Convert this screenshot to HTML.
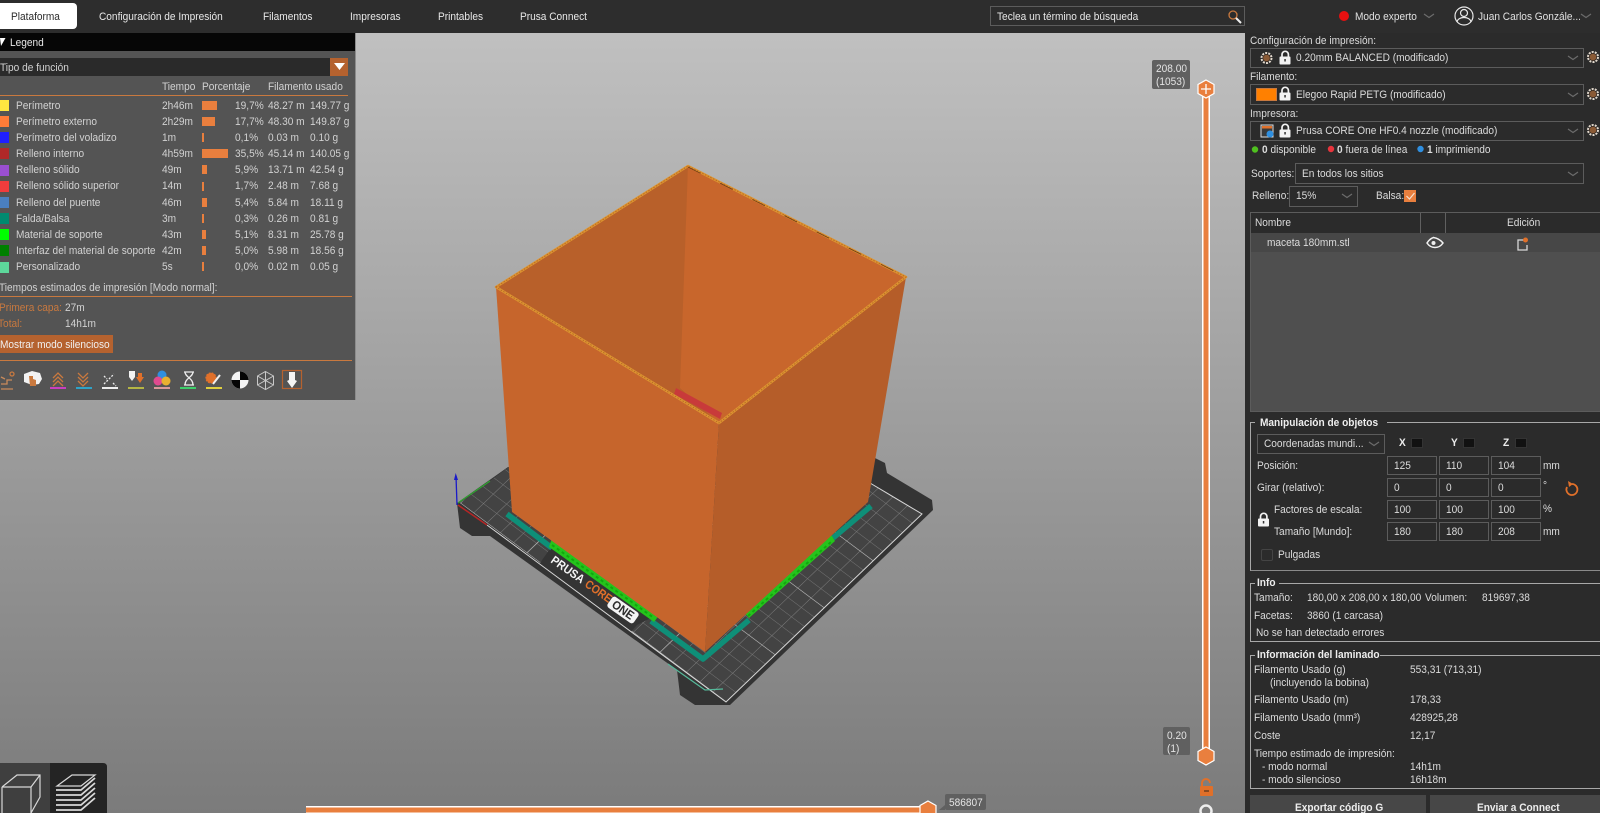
<!DOCTYPE html>
<html lang="es"><head><meta charset="utf-8"><title>PrusaSlicer</title>
<style>
html,body{margin:0;padding:0;width:1600px;height:813px;overflow:hidden;background:#2b2b2b}
body{position:relative;font-family:"Liberation Sans",sans-serif;font-size:11px;color:#dcdcdc;filter:blur(.3px)}
.a{position:absolute;box-sizing:border-box}
.t{position:absolute;white-space:nowrap;line-height:14px;transform:translateY(-50%) scaleX(.92);transform-origin:left center}
.b{font-weight:bold}
.box{position:absolute;box-sizing:border-box;border:1px solid #5c5c5c;background:#2b2b2b}
.g{position:absolute;box-sizing:border-box;border:1px solid #a8a8a8;border-right:0}
.l{color:#d2d2d2}.o{color:#c9793f}
svg{position:absolute;left:0;top:0}
</style></head><body>

<div class="a" style="left:0;top:0;width:1600px;height:33px;background:#2d2d2d"></div>
<div class="a" style="left:0;top:33px;width:1247px;height:780px;background:linear-gradient(#c0c0c0,#7b7b7b)"></div>
<div class="a" style="left:1245px;top:33px;width:355px;height:780px;background:#2b2b2b"></div>

<div class="a" style="left:0;top:3px;width:77px;height:26px;background:#fff;border-radius:0 4px 4px 0"></div>
<div class="a" style="left:990px;top:6px;width:255px;height:20px;border:1px solid #5c5c5c"></div>

<div class="a" style="left:0;top:33px;width:356px;height:367px;background:#545454;border-right:1px solid #8c8c8c"></div>
<div class="a" style="left:0;top:33px;width:355px;height:18px;background:#060606"></div>
<div class="a" style="left:0;top:58px;width:330px;height:18px;background:#2a2a2a"></div>
<div class="a" style="left:330px;top:58px;width:18px;height:18px;background:#b5622f"></div>
<div class="a" style="left:0;top:95px;width:348px;height:1px;background:#c9793f"></div>
<div class="a" style="left:0;top:296px;width:352px;height:1px;background:#c9793f"></div>
<div class="a" style="left:0;top:335px;width:113px;height:18px;background:#b5622f"></div>
<div class="a" style="left:0;top:360px;width:352px;height:1px;background:#c9793f"></div>

<div class="a" style="left:0;top:100px;width:9px;height:11px;background:#ffe640"></div>
<div class="a" style="left:0;top:116px;width:9px;height:11px;background:#ff7c38"></div>
<div class="a" style="left:0;top:132px;width:9px;height:11px;background:#1f1fff"></div>
<div class="a" style="left:0;top:148px;width:9px;height:11px;background:#b02828"></div>
<div class="a" style="left:0;top:165px;width:9px;height:11px;background:#9a4fd0"></div>
<div class="a" style="left:0;top:181px;width:9px;height:11px;background:#f03c3c"></div>
<div class="a" style="left:0;top:197px;width:9px;height:11px;background:#4a7fc0"></div>
<div class="a" style="left:0;top:213px;width:9px;height:11px;background:#008a70"></div>
<div class="a" style="left:0;top:229px;width:9px;height:11px;background:#00ff00"></div>
<div class="a" style="left:0;top:245px;width:9px;height:11px;background:#008000"></div>
<div class="a" style="left:0;top:262px;width:9px;height:11px;background:#5dd79b"></div>

<div class="a" style="left:202px;top:101px;width:15px;height:9px;background:#e97f3e"></div>
<div class="a" style="left:202px;top:117px;width:13px;height:9px;background:#e97f3e"></div>
<div class="a" style="left:202px;top:133px;width:1.5px;height:9px;background:#e97f3e"></div>
<div class="a" style="left:202px;top:149px;width:26px;height:9px;background:#e97f3e"></div>
<div class="a" style="left:202px;top:165px;width:5px;height:9px;background:#e97f3e"></div>
<div class="a" style="left:202px;top:182px;width:2px;height:9px;background:#e97f3e"></div>
<div class="a" style="left:202px;top:198px;width:4.5px;height:9px;background:#e97f3e"></div>
<div class="a" style="left:202px;top:214px;width:1.5px;height:9px;background:#e97f3e"></div>
<div class="a" style="left:202px;top:230px;width:4px;height:9px;background:#e97f3e"></div>
<div class="a" style="left:202px;top:246px;width:4px;height:9px;background:#e97f3e"></div>
<div class="a" style="left:202px;top:262px;width:1.5px;height:9px;background:#e97f3e"></div>

<div class="box" style="left:1250px;top:48px;width:334px;height:20px"></div>
<div class="box" style="left:1250px;top:84px;width:334px;height:21px"></div>
<div class="box" style="left:1250px;top:121px;width:334px;height:20px"></div>
<div class="a" style="left:1256px;top:88px;width:21px;height:13px;background:#ff8000;border:1px solid #c9793f"></div>
<div class="box" style="left:1295px;top:163px;width:289px;height:21px"></div>
<div class="box" style="left:1289px;top:186px;width:69px;height:21px"></div>
<div class="a" style="left:1404px;top:190px;width:12px;height:12px;background:#e97f3e"></div>

<div class="a" style="left:1250px;top:212px;width:350px;height:200px;background:#4f4f4f;border:1px solid #5c5c5c;border-right:0"></div>
<div class="a" style="left:1251px;top:213px;width:349px;height:20px;background:#2b2b2b"></div>
<div class="a" style="left:1251px;top:233px;width:349px;height:19px;background:#474747"></div>
<div class="a" style="left:1420px;top:213px;width:1px;height:20px;background:#606060"></div>
<div class="a" style="left:1445px;top:213px;width:1px;height:20px;background:#606060"></div>

<div class="g" style="left:1250px;top:422px;width:350px;height:149px;border-bottom-color:#8a8a8a"></div>
<div class="a" style="left:1255px;top:418px;width:132px;height:9px;background:#2b2b2b"></div>
<div class="g" style="left:1250px;top:583px;width:350px;height:59px"></div>
<div class="a" style="left:1255px;top:579px;width:24px;height:9px;background:#2b2b2b"></div>
<div class="g" style="left:1250px;top:655px;width:350px;height:134px"></div>
<div class="a" style="left:1255px;top:651px;width:125px;height:9px;background:#2b2b2b"></div>

<div class="box" style="left:1257px;top:434px;width:128px;height:20px"></div>
<div class="a" style="left:1411px;top:438px;width:12px;height:10px;background:#111;border:1px solid #333"></div>
<div class="a" style="left:1463px;top:438px;width:12px;height:10px;background:#111;border:1px solid #333"></div>
<div class="a" style="left:1515px;top:438px;width:12px;height:10px;background:#111;border:1px solid #333"></div>
<div class="box" style="left:1387px;top:456px;width:50px;height:19px"></div><div class="box" style="left:1439px;top:456px;width:50px;height:19px"></div><div class="box" style="left:1491px;top:456px;width:50px;height:19px"></div>
<div class="box" style="left:1387px;top:478px;width:50px;height:19px"></div><div class="box" style="left:1439px;top:478px;width:50px;height:19px"></div><div class="box" style="left:1491px;top:478px;width:50px;height:19px"></div>
<div class="box" style="left:1387px;top:500px;width:50px;height:19px"></div><div class="box" style="left:1439px;top:500px;width:50px;height:19px"></div><div class="box" style="left:1491px;top:500px;width:50px;height:19px"></div>
<div class="box" style="left:1387px;top:522px;width:50px;height:19px"></div><div class="box" style="left:1439px;top:522px;width:50px;height:19px"></div><div class="box" style="left:1491px;top:522px;width:50px;height:19px"></div>
<div class="box" style="left:1261px;top:549px;width:12px;height:12px;border-color:#444;border-radius:2px"></div>

<div class="a" style="left:1250px;top:795px;width:176px;height:18px;background:#474747"></div>
<div class="a" style="left:1430px;top:795px;width:170px;height:18px;background:#474747"></div>

<div class="a" style="left:1152px;top:60px;width:38px;height:29px;background:#606060;border-radius:2px"></div>
<div class="a" style="left:1163px;top:727px;width:27px;height:28px;background:#606060;border-radius:2px"></div>
<div class="a" style="left:945px;top:794px;width:41px;height:16px;background:#606060;border-radius:2px"></div>

<svg width="1600" height="813" viewBox="0 0 1600 813">
<defs>
<pattern id="g1" patternUnits="userSpaceOnUse" width="100" height="100" patternTransform="matrix(.098 -.094 .133 .0995 460 503)"><path d="M0 0H100M0 0V100" stroke="#7e7e7e" stroke-width="6" fill="none"/></pattern>
<pattern id="g2" patternUnits="userSpaceOnUse" width="500" height="500" patternTransform="matrix(.098 -.094 .133 .0995 460 503)"><path d="M0 0H500M0 0V500" stroke="#bdbdbd" stroke-width="8" fill="none"/></pattern>
<g id="gear"><circle r="5" fill="none" stroke="#e2d8cc" stroke-width="2" stroke-dasharray="2 1.15"/><circle r="3.6" fill="#8a5a35" stroke="#3a2a20" stroke-width=".6"/></g>
<g id="lock"><rect x="-5.500" y="-1.500" width="11" height="8" rx="1" fill="#f2f2f2"/><path d="M-3-1.500V-3.500a3.200 3.200 0 0 1 6.400 0V-1.500" fill="none" stroke="#f2f2f2" stroke-width="1.700"/><rect x="-.7" y="1" width="1.500" height="2.500" fill="#333"/></g>
<path id="chev" d="M-5-2L0 1.500 5-2" fill="none" stroke="#6c6c6c" stroke-width="1.200"/>
<clipPath id="gc"><path d="M460 503L726 702 922 514 870 483 700 381 510 466Z"/></clipPath>
</defs>

<!-- bed -->
<path d="M457 503L508 467 875 458 885 463 887 473 932 500 933 510 730 705 695 705 680 695 677 670 490 536 472 536 460 528Z" fill="#343434"/>
<g clip-path="url(#gc)"><rect x="440" y="350" width="500" height="360" fill="#434343"/><rect x="440" y="350" width="500" height="360" fill="url(#g1)"/><rect x="440" y="350" width="500" height="360" fill="url(#g2)"/></g>
<path d="M552 546L653 617 637 625 630 633 540 563Z" fill="#343434"/>
<path d="M487 525L726 702 922 514 870 483" fill="none" stroke="#d8d8d8" stroke-width="1"/>
<path d="M668 664L705 690 723 689" fill="none" stroke="#55b99a" stroke-width="1.200"/>
<path d="M457 505L456 476" stroke="#1a1ac8" stroke-width="1.300"/><path d="M454 480L455.700 473 458 480Z" fill="#1a1ac8"/>
<path d="M458 503L490 481" stroke="#2fa32f" stroke-width="1.300"/>
<path d="M458 505L487 525" stroke="#b52525" stroke-width="1.500"/>
<!-- skirt + support -->
<path d="M507 514L552 548M651 621L703 659 749 620M833 538L871 506" fill="none" stroke="#0e8f78" stroke-width="5.500" stroke-linejoin="round"/>
<path d="M552 538L660 614 654 622 549 547ZM742 610L830 533 835 541 749 618Z" fill="#25c41c"/>
<path d="M552 545L654 618M748 616L832 541" stroke="#12a80e" stroke-width="2" stroke-dasharray="3 3"/>
<!-- logo -->
<g font-family="'Liberation Sans',sans-serif" font-weight="bold" font-size="12">
<text transform="translate(550 562) rotate(35)" fill="#f4f4f4" textLength="38" lengthAdjust="spacingAndGlyphs">PRUSA</text>
<text transform="translate(584 586) rotate(35)" fill="#e0702a" textLength="30" lengthAdjust="spacingAndGlyphs">CORE</text>
<g transform="translate(623 610) rotate(35)"><rect x="-16" y="-6.500" width="32" height="13" rx="3" fill="#f4f4f4"/><text x="-12" y="4" fill="#2b2b2b" textLength="24" lengthAdjust="spacingAndGlyphs">ONE</text></g>
</g>
<!-- box -->
<path d="M496 287L688 166 906 277 719 423Z" fill="#c8662c"/>
<path d="M496 287L688 166 680 388 722 426Z" fill="#b8602a"/>
<path d="M688 166L682 388 720 416" fill="none" stroke="#c8662c" stroke-width="0"/>
<path d="M682 388L688 166 906 277 720 418Z" fill="#c8662c"/>
<path d="M496 287L719 423 705 652 512 512Z" fill="#c6652c"/>
<path d="M906 277L719 423 705 652 868 502Z" fill="#b55d29"/>
<path d="M676 388L722 413 720 419 674 394Z" fill="#c83a3a"/>
<path d="M496 287L688 166 906 277 719 423Z" fill="none" stroke="#dd9430" stroke-width="2.500" stroke-linejoin="round"/>
<path d="M496 287L688 166 906 277 719 423Z" fill="none" stroke="#b86a28" stroke-width="1" stroke-dasharray="1.500 1.500"/>
<path d="M688 167L906 277" fill="none" stroke="#6e3c14" stroke-width=".8" stroke-dasharray="14 22"/>

<!-- vertical slider -->
<path d="M1206 89V756" stroke="#fff" stroke-width="8"/><path d="M1206 89V756" stroke="#e97f3e" stroke-width="5"/>
<path d="M1206 80l8 4.500v9l-8 4.500-8-4.500v-9z" fill="#e97f3e" stroke="#fff" stroke-width="1.200"/>
<path d="M1201 89h10M1206 84v10" stroke="#fff" stroke-width="1.300"/>
<path d="M1206 747l8 4.500v9l-8 4.500-8-4.500v-9z" fill="#e97f3e" stroke="#fff" stroke-width="1.200"/>
<path d="M1190 755l-5-5v5zM1190 89l-5-5v5z" fill="#606060"/>
<rect x="1200" y="786" width="13" height="10" rx="1" fill="#e0702a"/><path d="M1202 786v-3a4 4 0 0 1 8 0" fill="none" stroke="#e0702a" stroke-width="2"/><rect x="1204" y="790" width="5" height="2" fill="#8a4a20"/>
<circle cx="1206" cy="811" r="5.500" fill="none" stroke="#eee" stroke-width="2.500"/>
<!-- horizontal slider -->
<path d="M306 810H928" stroke="#fff" stroke-width="8"/><path d="M306 810H928" stroke="#e97f3e" stroke-width="5"/>
<path d="M928 801l8 4.500v9l-8 4.500-8-4.500v-9z" fill="#e97f3e" stroke="#fff" stroke-width="1.200"/>
<path d="M945 805l-6 5h6z" fill="#606060"/>

<!-- view buttons -->
<path d="M0 763H50V813H0Z" fill="#3f3f3f"/>
<path d="M50 763H103Q107 763 107 767V813H50Z" fill="#242424"/>
<path d="M2 787L17 775H40V797L31 813M2 787V813M2 787H31V813M31 787L40 775" fill="none" stroke="#d8d8d8" stroke-width="1.200"/>
<path d="M57 786L72 775H95L81 786Z" fill="none" stroke="#d8d8d8" stroke-width="1.200"/>
<path d="M56 790H81L95 778M56 795H81L95 783M56 800H81L95 788M56 805H81L95 793M56 810H81L95 798" fill="none" stroke="#d8d8d8" stroke-width="1.800"/>

<!-- legend icons -->
<path d="M0 38H5.500L1 46Z" fill="#fff"/>
<path d="M334 63h11l-5.500 7z" fill="#fff"/>
<g fill="none" stroke-width="1.300">
<path d="M1 384h6v-4h5M1 389h12M1 377l4 2" stroke="#c98a5a"/><circle cx="12" cy="374" r="2" stroke="#c9793f"/>
<path d="M24 374l8-3 8 2 2 6-3 5-7 1-8-3z" fill="#f2f2f2" stroke="none"/><path d="M29 376h4v3l3 1v6h-6z" fill="#c9793f" stroke="none"/>
<path d="M53 378l5-5 5 5M53 382l5-5 5 5M53 386l5-5 5 5" stroke="#c9793f"/><path d="M50 388h16" stroke="#c93fc0" stroke-width="2"/>
<path d="M78 373l5 5 5-5M78 377l5 5 5-5M78 381l5 5 5-5" stroke="#c9793f"/><path d="M76 388h16" stroke="#2fa3c8" stroke-width="2"/>
<path d="M104 384l10-10M104 376l3 3M113 383l3 3" stroke="#eee" stroke-dasharray="2 1.500"/><path d="M102 388h16" stroke="#eee" stroke-width="2"/>
<path d="M129 371h6v6l-3 4-3-4z" fill="#f2f2f2" stroke="none"/><path d="M138 373h4v4h2l-4 6-4-6h2z" fill="#e0702a" stroke="none"/><path d="M128 388h16" stroke="#b5b544" stroke-width="2"/>
<circle cx="162" cy="375" r="4.500" fill="#2f8fe0" stroke="none"/><circle cx="158" cy="381" r="4.500" fill="#e04a8f" stroke="none"/><circle cx="166" cy="381" r="4.500" fill="#e8b030" stroke="none"/><path d="M154 388h16" stroke="#d99a9a" stroke-width="2"/>
<path d="M184 372h10M184 385h10M185 372c0 5 8 6 8 13M193 372c0 5-8 6-8 13" stroke="#eee"/><path d="M180 388h16" stroke="#3ecf6a" stroke-width="2"/>
<circle cx="211" cy="378" r="5" fill="#e0702a" stroke="#e0702a" stroke-dasharray="2 1"/><path d="M213 384l7-9" stroke="#eee" stroke-width="2"/><path d="M206 388h16" stroke="#e0d040" stroke-width="2"/>
</g>
<circle cx="240" cy="380" r="8.500" fill="#f4f4f4"/><path d="M240 380V371.500A8.500 8.500 0 0 1 248.500 380ZM240 380V388.500A8.500 8.500 0 0 1 231.500 380Z" fill="#050505"/>
<path d="M265.500 371.500l8 4.500v9l-8 4.500-8-4.500v-9zM257.500 376l8 4.500 8-4.500M265.500 380.500v9M265.500 371.500v9M257.500 385l8-4.500 8 4.500" fill="none" stroke="#c8c8c8" stroke-width="1"/>
<rect x="282.500" y="370.500" width="19" height="18" fill="none" stroke="#b5622f" stroke-width="1.200"/>
<path d="M289 372h6v8l2 1-5 7-5-7 2-1z" fill="#f4f4f4"/>

<!-- top bar icons -->
<circle cx="1344" cy="16" r="5" fill="#e81010"/>
<use href="#chev" x="1429" y="16"/><use href="#chev" x="1586" y="16"/>
<circle cx="1464" cy="16" r="9" fill="none" stroke="#e8e8e8" stroke-width="1.200"/><circle cx="1464" cy="13" r="3.500" fill="none" stroke="#e8e8e8" stroke-width="1.200"/><path d="M1457 22c1-6 13-6 14 0" fill="none" stroke="#e8e8e8" stroke-width="1.200"/>
<circle cx="1233" cy="15" r="4" fill="none" stroke="#c9793f" stroke-width="1.300"/><path d="M1236 18l5 5" stroke="#eee" stroke-width="2"/>

<!-- right panel icons -->
<use href="#gear" x="1266.500" y="58"/><use href="#gear" x="1593" y="57"/><use href="#gear" x="1593" y="94"/><use href="#gear" x="1593" y="130"/>
<use href="#lock" x="1285" y="58"/><use href="#lock" x="1285" y="94"/><use href="#lock" x="1285" y="131"/>
<rect x="1261" y="125" width="12" height="12" fill="#3a3a3a" stroke="#ddd" stroke-width="1"/><rect x="1262" y="126" width="10" height="2.500" fill="#e0702a"/><circle cx="1270" cy="134" r="3.500" fill="#2f8fe0"/>
<use href="#chev" x="1573" y="58"/><use href="#chev" x="1573" y="95"/><use href="#chev" x="1573" y="131"/><use href="#chev" x="1573" y="174"/><use href="#chev" x="1347" y="196"/><use href="#chev" x="1374" y="444"/>
<circle cx="1255" cy="149.500" r="3.200" fill="#4fc01f"/><circle cx="1331" cy="149" r="3.200" fill="#e8343c"/><circle cx="1420.500" cy="149" r="3.200" fill="#2f8fe0"/>
<path d="M1406.500 196l3 3 5-6" fill="none" stroke="#f5e0d0" stroke-width="1.200"/>
<path d="M1427 243c4-6 8-5.500 6.500-5.500s5 0 9.500 5.500c-4 6-12 6-16 0z" fill="none" stroke="#f0f0f0" stroke-width="1.500"/><circle cx="1433.500" cy="243" r="2" fill="#f0f0f0"/>
<path d="M1525 240h-7v10h9v-5" fill="none" stroke="#d8d8d8" stroke-width="1.300"/><circle cx="1525.500" cy="240" r="2.500" fill="#e0702a"/>
<path d="M1572 484a5.500 5.500 0 1 1-5 3" fill="none" stroke="#e0702a" stroke-width="1.800"/><path d="M1568 481l5 3-4 3z" fill="#e0702a"/>
<use href="#lock" x="1263.500" y="520"/>
</svg>

<!-- top bar text -->
<span class="t" style="left:11px;top:16.500px;color:#2b2b2b">Plataforma</span>
<span class="t" style="left:99px;top:16.500px;color:#e8e8e8">Configuración de Impresión</span>
<span class="t" style="left:263px;top:16.500px;color:#e8e8e8">Filamentos</span>
<span class="t" style="left:350px;top:16.500px;color:#e8e8e8">Impresoras</span>
<span class="t" style="left:438px;top:16.500px;color:#e8e8e8">Printables</span>
<span class="t" style="left:520px;top:16.500px;color:#e8e8e8">Prusa Connect</span>
<span class="t" style="left:997px;top:16.500px;color:#e8e8e8">Teclea un término de búsqueda</span>
<span class="t" style="left:1355px;top:16.500px;color:#e0e0e0">Modo experto</span>
<span class="t" style="left:1478px;top:16.500px;color:#e0e0e0">Juan Carlos Gonzále...</span>

<!-- legend text -->
<span class="t" style="left:10px;top:43px;color:#e8e8e8">Legend</span>
<span class="t l" style="left:0;top:67.500px">Tipo de función</span>
<span class="t l" style="left:162px;top:86.500px">Tiempo</span><span class="t l" style="left:202px;top:86.500px">Porcentaje</span><span class="t l" style="left:268px;top:86.500px">Filamento usado</span>

<span class="t l" style="left:16px;top:105.500px">Perímetro</span><span class="t l" style="left:162px;top:105.500px">2h46m</span><span class="t l" style="left:235px;top:105.500px">19,7%</span><span class="t l" style="left:268px;top:105.500px">48.27 m</span><span class="t l" style="left:310px;top:105.500px">149.77 g</span>
<span class="t l" style="left:16px;top:121.500px">Perímetro externo</span><span class="t l" style="left:162px;top:121.500px">2h29m</span><span class="t l" style="left:235px;top:121.500px">17,7%</span><span class="t l" style="left:268px;top:121.500px">48.30 m</span><span class="t l" style="left:310px;top:121.500px">149.87 g</span>
<span class="t l" style="left:16px;top:138px">Perímetro del voladizo</span><span class="t l" style="left:162px;top:138px">1m</span><span class="t l" style="left:235px;top:138px">0,1%</span><span class="t l" style="left:268px;top:138px">0.03 m</span><span class="t l" style="left:310px;top:138px">0.10 g</span>
<span class="t l" style="left:16px;top:154px">Relleno interno</span><span class="t l" style="left:162px;top:154px">4h59m</span><span class="t l" style="left:235px;top:154px">35,5%</span><span class="t l" style="left:268px;top:154px">45.14 m</span><span class="t l" style="left:310px;top:154px">140.05 g</span>
<span class="t l" style="left:16px;top:170px">Relleno sólido</span><span class="t l" style="left:162px;top:170px">49m</span><span class="t l" style="left:235px;top:170px">5,9%</span><span class="t l" style="left:268px;top:170px">13.71 m</span><span class="t l" style="left:310px;top:170px">42.54 g</span>
<span class="t l" style="left:16px;top:186px">Relleno sólido superior</span><span class="t l" style="left:162px;top:186px">14m</span><span class="t l" style="left:235px;top:186px">1,7%</span><span class="t l" style="left:268px;top:186px">2.48 m</span><span class="t l" style="left:310px;top:186px">7.68 g</span>
<span class="t l" style="left:16px;top:202.500px">Relleno del puente</span><span class="t l" style="left:162px;top:202.500px">46m</span><span class="t l" style="left:235px;top:202.500px">5,4%</span><span class="t l" style="left:268px;top:202.500px">5.84 m</span><span class="t l" style="left:310px;top:202.500px">18.11 g</span>
<span class="t l" style="left:16px;top:218.500px">Falda/Balsa</span><span class="t l" style="left:162px;top:218.500px">3m</span><span class="t l" style="left:235px;top:218.500px">0,3%</span><span class="t l" style="left:268px;top:218.500px">0.26 m</span><span class="t l" style="left:310px;top:218.500px">0.81 g</span>
<span class="t l" style="left:16px;top:234.500px">Material de soporte</span><span class="t l" style="left:162px;top:234.500px">43m</span><span class="t l" style="left:235px;top:234.500px">5,1%</span><span class="t l" style="left:268px;top:234.500px">8.31 m</span><span class="t l" style="left:310px;top:234.500px">25.78 g</span>
<span class="t l" style="left:16px;top:251px">Interfaz del material de soporte</span><span class="t l" style="left:162px;top:251px">42m</span><span class="t l" style="left:235px;top:251px">5,0%</span><span class="t l" style="left:268px;top:251px">5.98 m</span><span class="t l" style="left:310px;top:251px">18.56 g</span>
<span class="t l" style="left:16px;top:267px">Personalizado</span><span class="t l" style="left:162px;top:267px">5s</span><span class="t l" style="left:235px;top:267px">0,0%</span><span class="t l" style="left:268px;top:267px">0.02 m</span><span class="t l" style="left:310px;top:267px">0.05 g</span>

<span class="t l" style="left:-1px;top:288px">Tiempos estimados de impresión [Modo normal]:</span>
<span class="t o" style="left:-1px;top:308px">Primera capa:</span><span class="t l" style="left:65px;top:308px">27m</span>
<span class="t o" style="left:-2px;top:324px">Total:</span><span class="t l" style="left:65px;top:324px">14h1m</span>
<span class="t" style="left:0;top:345px;color:#f0f0f0">Mostrar modo silencioso</span>

<!-- viewport text -->
<span class="t" style="left:1156px;top:69px;font-size:11px;color:#e4e4e4">208.00</span>
<span class="t" style="left:1156px;top:82px;font-size:11px;color:#e4e4e4">(1053)</span>
<span class="t" style="left:1167px;top:736px;font-size:11px;color:#e4e4e4">0.20</span>
<span class="t" style="left:1167px;top:749px;font-size:11px;color:#e4e4e4">(1)</span>
<span class="t" style="left:949px;top:803px;font-size:11px;color:#e4e4e4">586807</span>

<!-- right panel text -->
<span class="t" style="left:1250px;top:41px">Configuración de impresión:</span>
<span class="t" style="left:1296px;top:58px">0.20mm BALANCED (modificado)</span>
<span class="t" style="left:1250px;top:77px">Filamento:</span>
<span class="t" style="left:1296px;top:94.500px">Elegoo Rapid PETG (modificado)</span>
<span class="t" style="left:1250px;top:114px">Impresora:</span>
<span class="t" style="left:1296px;top:131px">Prusa CORE One HF0.4 nozzle (modificado)</span>
<span class="t" style="left:1262px;top:149.500px"><b>0</b> disponible</span>
<span class="t" style="left:1337px;top:149.500px"><b>0</b> fuera de línea</span>
<span class="t" style="left:1427px;top:149.500px"><b>1</b> imprimiendo</span>
<span class="t" style="left:1251px;top:173.500px">Soportes:</span>
<span class="t" style="left:1302px;top:173.500px">En todos los sitios</span>
<span class="t" style="left:1252px;top:196px">Relleno:</span>
<span class="t" style="left:1296px;top:196px">15%</span>
<span class="t" style="left:1376px;top:196px">Balsa:</span>
<span class="t" style="left:1255px;top:222.500px">Nombre</span>
<span class="t" style="left:1507px;top:222.500px">Edición</span>
<span class="t" style="left:1267px;top:242.500px">maceta 180mm.stl</span>

<span class="t b" style="left:1260px;top:423px;color:#eee">Manipulación de objetos</span>
<span class="t" style="left:1264px;top:444px">Coordenadas mundi...</span>
<span class="t b" style="left:1399px;top:443px;color:#eee">X</span><span class="t b" style="left:1451px;top:443px;color:#eee">Y</span><span class="t b" style="left:1503px;top:443px;color:#eee">Z</span>
<span class="t" style="left:1257px;top:466px">Posición:</span>
<span class="t" style="left:1394px;top:466px">125</span><span class="t" style="left:1446px;top:466px">110</span><span class="t" style="left:1498px;top:466px">104</span><span class="t" style="left:1543px;top:466px">mm</span>
<span class="t" style="left:1257px;top:488px">Girar (relativo):</span>
<span class="t" style="left:1394px;top:488px">0</span><span class="t" style="left:1446px;top:488px">0</span><span class="t" style="left:1498px;top:488px">0</span><span class="t" style="left:1543px;top:486px">°</span>
<span class="t" style="left:1274px;top:510px">Factores de escala:</span>
<span class="t" style="left:1394px;top:510px">100</span><span class="t" style="left:1446px;top:510px">100</span><span class="t" style="left:1498px;top:510px">100</span><span class="t" style="left:1543px;top:509px">%</span>
<span class="t" style="left:1274px;top:532px">Tamaño [Mundo]:</span>
<span class="t" style="left:1394px;top:532px">180</span><span class="t" style="left:1446px;top:532px">180</span><span class="t" style="left:1498px;top:532px">208</span><span class="t" style="left:1543px;top:532px">mm</span>
<span class="t" style="left:1278px;top:555px">Pulgadas</span>

<span class="t b" style="left:1257px;top:583px;color:#eee">Info</span>
<span class="t" style="left:1254px;top:598px">Tamaño:</span><span class="t" style="left:1307px;top:598px">180,00 x 208,00 x 180,00</span><span class="t" style="left:1425px;top:598px">Volumen:</span><span class="t" style="left:1482px;top:598px">819697,38</span>
<span class="t" style="left:1254px;top:615.500px">Facetas:</span><span class="t" style="left:1307px;top:615.500px">3860 (1 carcasa)</span>
<span class="t" style="left:1256px;top:632.500px">No se han detectado errores</span>

<span class="t b" style="left:1257px;top:655px;color:#eee">Información del laminado</span>
<span class="t" style="left:1254px;top:670px">Filamento Usado (g)</span><span class="t" style="left:1410px;top:670px">553,31 (713,31)</span>
<span class="t" style="left:1270px;top:682.500px">(incluyendo la bobina)</span>
<span class="t" style="left:1254px;top:700px">Filamento Usado (m)</span><span class="t" style="left:1410px;top:700px">178,33</span>
<span class="t" style="left:1254px;top:718px">Filamento Usado (mm³)</span><span class="t" style="left:1410px;top:718px">428925,28</span>
<span class="t" style="left:1254px;top:735.500px">Coste</span><span class="t" style="left:1410px;top:735.500px">12,17</span>
<span class="t" style="left:1254px;top:754px">Tiempo estimado de impresión:</span>
<span class="t" style="left:1262px;top:767px">- modo normal</span><span class="t" style="left:1410px;top:767px">14h1m</span>
<span class="t" style="left:1262px;top:780px">- modo silencioso</span><span class="t" style="left:1410px;top:780px">16h18m</span>
<span class="t b" style="left:1295px;top:808px;color:#eee">Exportar código G</span>
<span class="t b" style="left:1477px;top:808px;color:#eee">Enviar a Connect</span>
</body></html>
